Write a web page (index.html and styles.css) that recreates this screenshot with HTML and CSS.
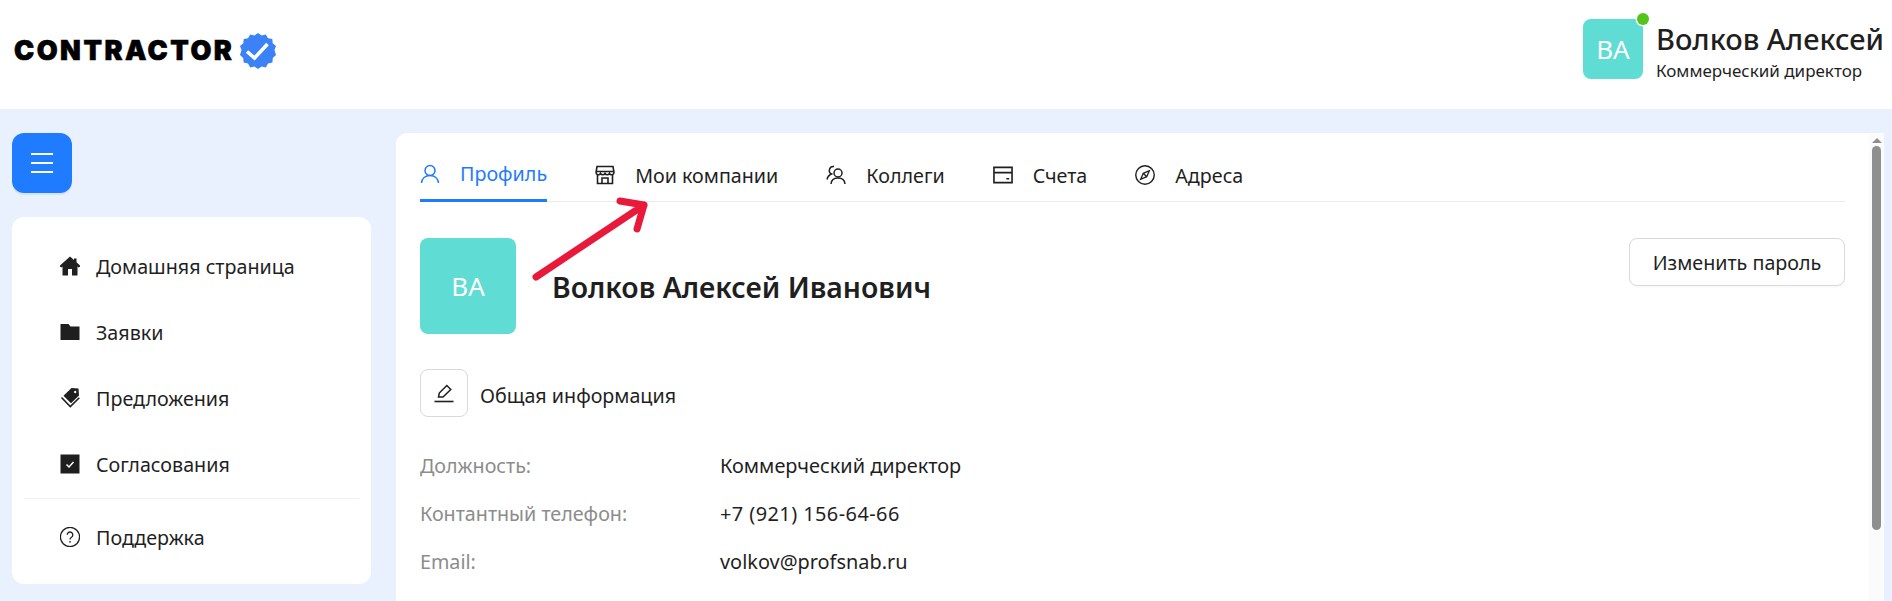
FILE: index.html
```html
<!DOCTYPE html>
<html lang="ru">
<head>
  <meta charset="UTF-8">
  <title>Contractor</title>
  <link rel="stylesheet" href="styles.css">
</head>
<body>
  <header class="topbar">
    <div class="logo">
      <span class="logo-text">CONTRACTOR</span>
      <svg class="logo-badge" width="38" height="38" viewBox="0 0 38 38">
        <polygon fill="#3b82f6" points="19,1 22.6,3.6 26.8,2.6 29,6.2 33.3,7 33.7,11.3 37,14 35.5,18 37,23 33.8,26 33.4,30.5 29,31.5 26.8,35.4 22.6,34.4 19,37 15.4,34.4 11.2,35.4 9,31.5 4.6,30.5 4.2,26 1,23 2.5,18 1,14 4.3,11.3 4.7,7 9,6.2 11.2,2.6 15.4,3.6"/>
        <path d="M8 19.500l7.500 6.500L28.500 12" fill="none" stroke="#fff" stroke-width="3.600"/>
      </svg>
    </div>
    <div class="user">
      <div class="user-avatar">
        ВА
        <span class="user-dot"></span>
      </div>
      <div class="user-info">
        <div class="user-name">Волков Алексей</div>
        <div class="user-role">Коммерческий директор</div>
      </div>
    </div>
  </header>

  <div class="content">
    <aside class="sidebar">
      <button class="menu-toggle" type="button" aria-label="Меню">
        <span></span><span></span><span></span>
      </button>
      <nav class="side-card">
        <a class="side-item" href="#">
          <svg class="side-icon" viewBox="0 0 20 20"><path fill="#1f1f1f" d="M10 .5L14 4V2.500h2.500V6.300L20.500 10l-1.700 1.600-1.300-1.100V19.500H12V13H8v6.500H2.500V10.500l-1.300 1.100L-.5 10z"/></svg>
          Домашняя страница
        </a>
        <a class="side-item" href="#">
          <svg class="side-icon" viewBox="0 0 20 20"><path fill="#1f1f1f" d="M.5 2h8l2 2.500h9V18H.5z"/></svg>
          Заявки
        </a>
        <a class="side-item" href="#">
          <svg class="side-icon" viewBox="0 0 20 20"><path fill="#1f1f1f" d="M11.500 0l7 .5.500 7-8 7.800-7.500-7.500zM15.200 2.800a1.200 1.200 0 1 0 .01 0z"/><path fill="none" stroke="#1f1f1f" stroke-width="1.600" d="M1.500 9.500l8.800 9 9-8.800"/></svg>
          Предложения
        </a>
        <a class="side-item" href="#">
          <svg class="side-icon" viewBox="0 0 20 20"><rect x=".5" y=".5" width="19" height="19" fill="#1f1f1f"/><path d="M6.500 10.500l2.500 2.500 4.500-5" fill="none" stroke="#fff" stroke-width="1.500"/></svg>
          Согласования
        </a>
        <div class="side-divider"></div>
        <a class="side-item" href="#">
          <svg class="side-icon" viewBox="0 0 20 20"><circle cx="10" cy="10" r="9.600" fill="none" stroke="#1f1f1f" stroke-width="1.300"/><path d="M7.200 7.800a2.800 2.800 0 1 1 4.300 2.400c-1 .6-1.500 1.100-1.500 2.200" fill="none" stroke="#1f1f1f" stroke-width="1.300"/><circle cx="10" cy="14.800" r=".9" fill="#1f1f1f"/></svg>
          Поддержка
        </a>
      </nav>
    </aside>

    <main class="panel">
      <div class="panel-body">
        <div class="tabs">
          <a class="tab tab-active" href="#">
            <svg class="tab-icon" viewBox="0 0 20 20"><circle cx="10" cy="6.500" r="5" fill="none" stroke="currentColor" stroke-width="1.500"/><path d="M1.500 19c.4-4.500 3.800-7.500 8.500-7.500s8.100 3 8.500 7.500" fill="none" stroke="currentColor" stroke-width="1.500"/></svg>
            Профиль
          </a>
          <a class="tab" href="#">
            <svg class="tab-icon" viewBox="0 0 20 20"><path d="M2 1.500h16l1 6a2.400 2.400 0 0 1-4.500 1 2.600 2.600 0 0 1-4.500 0 2.600 2.600 0 0 1-4.500 0A2.400 2.400 0 0 1 1 7.500zM1.500 6.500h17M2.500 10v8.500h15V10M7 18.500V13h6v5.500" fill="none" stroke="currentColor" stroke-width="1.600"/></svg>
            Мои компании
          </a>
          <a class="tab" href="#">
            <svg class="tab-icon" viewBox="0 0 20 20"><circle cx="12" cy="8" r="4" fill="none" stroke="currentColor" stroke-width="1.500"/><path d="M5 19c.3-3.700 3-6 7-6s6.700 2.300 7 6M8 1.500A4 4 0 0 0 5.500 9C3 10 1.500 12 1 14.500" fill="none" stroke="currentColor" stroke-width="1.500"/></svg>
            Коллеги
          </a>
          <a class="tab" href="#">
            <svg class="tab-icon" viewBox="0 0 21 20"><path d="M1 2h19v16H1zM1 7.500h19" fill="none" stroke="currentColor" stroke-width="1.700"/><path d="M14 14h3" stroke="currentColor" stroke-width="1.700"/></svg>
            Счета
          </a>
          <a class="tab" href="#">
            <svg class="tab-icon" viewBox="0 0 21 21"><circle cx="10.500" cy="10.500" r="9.700" fill="none" stroke="currentColor" stroke-width="1.500"/><path d="M15 6l-2.700 6.300L6 15l2.700-6.300zM8.700 8.700l3.600 3.600" fill="none" stroke="currentColor" stroke-width="1.400"/></svg>
            Адреса
          </a>
        </div>

        <div class="profile-head">
          <div class="profile-avatar">ВА</div>
          <h1 class="profile-name">Волков Алексей Иванович</h1>
          <button class="btn-outline" type="button">Изменить пароль</button>
        </div>

        <div class="section-head">
          <button class="btn-edit" type="button" aria-label="Редактировать">
            <svg width="20" height="20" viewBox="0 0 20 20"><path d="M4.500 14l.8-4L12.800 2.500 16.800 6.500 9 14z" fill="none" stroke="#1f1f1f" stroke-width="1.500"/><path d="M.5 18.500h19" stroke="#1f1f1f" stroke-width="1.600"/></svg>
          </button>
          <span class="section-title">Общая информация</span>
        </div>

        <div class="info">
          <div class="info-row"><span class="info-label">Должность:</span><span class="info-value">Коммерческий директор</span></div>
          <div class="info-row"><span class="info-label">Контантный телефон:</span><span class="info-value info-phone">+7 (921) 156-64-66</span></div>
          <div class="info-row"><span class="info-label">Email:</span><span class="info-value">volkov@profsnab.ru</span></div>
        </div>
      </div>

      <div class="scroll">
        <div class="scroll-up"></div>
        <div class="scroll-thumb"></div>
      </div>

      <svg class="arrow" width="130" height="90" viewBox="0 0 130 90">
        <path d="M8 84L116 12M92 8l24 4-7 24" fill="none" stroke="#e8193a" stroke-width="7" stroke-linecap="round" stroke-linejoin="round"/>
      </svg>
    </main>
  </div>
</body>
</html>
```

FILE: styles.css
```css
* {
  box-sizing: border-box;
}

html, body {
  height: 100%;
}

body {
  margin: 0;
  overflow: hidden;
  background-color: #e9f0fe;
  color: #1f1f1f;
  font-family: "Noto Sans", sans-serif;
  font-size: 19.7px;
}

a {
  color: inherit;
  text-decoration: none;
}

button {
  font-family: inherit;
  cursor: pointer;
}

/* top bar */
.topbar {
  height: 109px;
  background-color: white;
  display: flex;
  justify-content: space-between;
  align-items: center;
  padding: 0 8px 0 14px;
}

.logo {
  display: flex;
  align-items: center;
  gap: 5px;
  margin-bottom: 8px;
}

.logo-text {
  font-family: Inter, sans-serif;
  font-weight: 900;
  font-size: 27px;
  letter-spacing: 2.5px;
  color: black;
  -webkit-text-stroke: 0.6px black;
}

.user {
  display: flex;
  align-items: center;
  gap: 13px;
  margin-bottom: 11px;
}

.user-avatar {
  position: relative;
  width: 60px;
  height: 60px;
  border-radius: 8px;
  background-color: #5fddd4;
  color: white;
  font-size: 26px;
  display: flex;
  align-items: center;
  justify-content: center;
}

.user-dot {
  position: absolute;
  top: -6px;
  right: -6px;
  width: 12px;
  height: 12px;
  border-radius: 50%;
  background-color: #52c41a;
  box-shadow: 0 0 0 1.5px white;
}

.user-info {
  margin-top: 6px;
}

.user-name {
  font-size: 29px;
  font-weight: 500;
  line-height: 38px;
}

.user-role {
  font-size: 17px;
  line-height: 26px;
}

/* page below the bar */
.content {
  display: flex;
  gap: 25px;
  padding: 24px 8px 0 12px;
  height: 492px;
}

.sidebar {
  width: 359px;
  flex: none;
}

.menu-toggle {
  width: 60px;
  height: 60px;
  border: none;
  border-radius: 12px;
  background-color: #1f7bff;
  display: flex;
  flex-direction: column;
  align-items: center;
  justify-content: center;
  gap: 7px;
  padding: 0;
  box-shadow: 0 2px 0 rgba(31, 123, 255, 0.1);
}

.menu-toggle span {
  display: block;
  width: 22px;
  height: 2px;
  background-color: white;
}

.side-card {
  margin-top: 24px;
  height: 367px;
  background-color: white;
  border-radius: 12px;
  padding: 16px 12px 0;
}

.side-item {
  display: flex;
  align-items: center;
  gap: 16px;
  height: 66px;
  padding-left: 36px;
}

.side-icon {
  width: 20px;
  height: 20px;
  flex: none;
}

.side-divider {
  height: 1px;
  margin-top: 1px;
  margin-bottom: 5px;
  background-color: #f0f0f0;
}

/* main panel */
.panel {
  position: relative;
  flex: 1;
  display: flex;
  background-color: white;
  border-radius: 12px 0 0 0;
  overflow: hidden;
}

.panel-body {
  flex: 1;
  padding: 0 24px;
  background-color: white;
  border-radius: 0 12px 0 0;
}

.scroll {
  width: 15px;
  flex: none;
  background-color: #fbfbfb;
  padding: 5px 3px 0;
}

.scroll-up {
  width: 0;
  margin: 0 auto;
  border-left: 5px solid transparent;
  border-right: 5px solid transparent;
  border-bottom: 5px solid #8f8f8f;
}

.scroll-thumb {
  margin-top: 3px;
  height: 384px;
  border-radius: 5px;
  background-color: #8f8f8f;
}

.tabs {
  display: flex;
  gap: 48px;
  height: 69px;
  border-bottom: 1px solid #ebebeb;
}

.tab {
  display: flex;
  align-items: center;
  gap: 20px;
  height: 69px;
  padding-top: 15px;
}

.tab-active {
  color: #1f7bff;
  border-bottom: 3px solid #1f7bff;
}

.tab-icon {
  width: 20px;
  height: 20px;
  flex: none;
}

.profile-head {
  display: flex;
  align-items: center;
  margin-top: 36px;
  height: 96px;
}

.profile-avatar {
  width: 96px;
  height: 96px;
  flex: none;
  border-radius: 8px;
  background-color: #5fddd4;
  color: white;
  font-size: 26px;
  display: flex;
  align-items: center;
  justify-content: center;
}

.profile-name {
  flex: 1;
  margin: 2px 0 0 36px;
  font-size: 28.4px;
  font-weight: 600;
}

.btn-outline {
  align-self: flex-start;
  width: 216px;
  height: 48px;
  background-color: white;
  border: 1px solid #d9d9d9;
  border-radius: 8px;
  box-shadow: 0 2px 0 rgba(0, 0, 0, 0.02);
  color: #1f1f1f;
  font-size: 19.7px;
}

.section-head {
  display: flex;
  align-items: center;
  gap: 12px;
  margin-top: 35px;
}

.section-title {
  padding-top: 4px;
}

.btn-edit {
  width: 48px;
  height: 48px;
  padding: 0;
  background-color: white;
  border: 1px solid #d9d9d9;
  border-radius: 8px;
  display: flex;
  align-items: center;
  justify-content: center;
}

.info {
  margin-top: 24px;
}

.info-row {
  display: flex;
  height: 48px;
  align-items: center;
}

.info-label {
  width: 300px;
  color: #8c8c8c;
}

.info-value {
  font-size: 19.9px;
}

.info-phone {
  letter-spacing: 0.45px;
}

.arrow {
  position: absolute;
  left: 132px;
  top: 60px;
}
```
